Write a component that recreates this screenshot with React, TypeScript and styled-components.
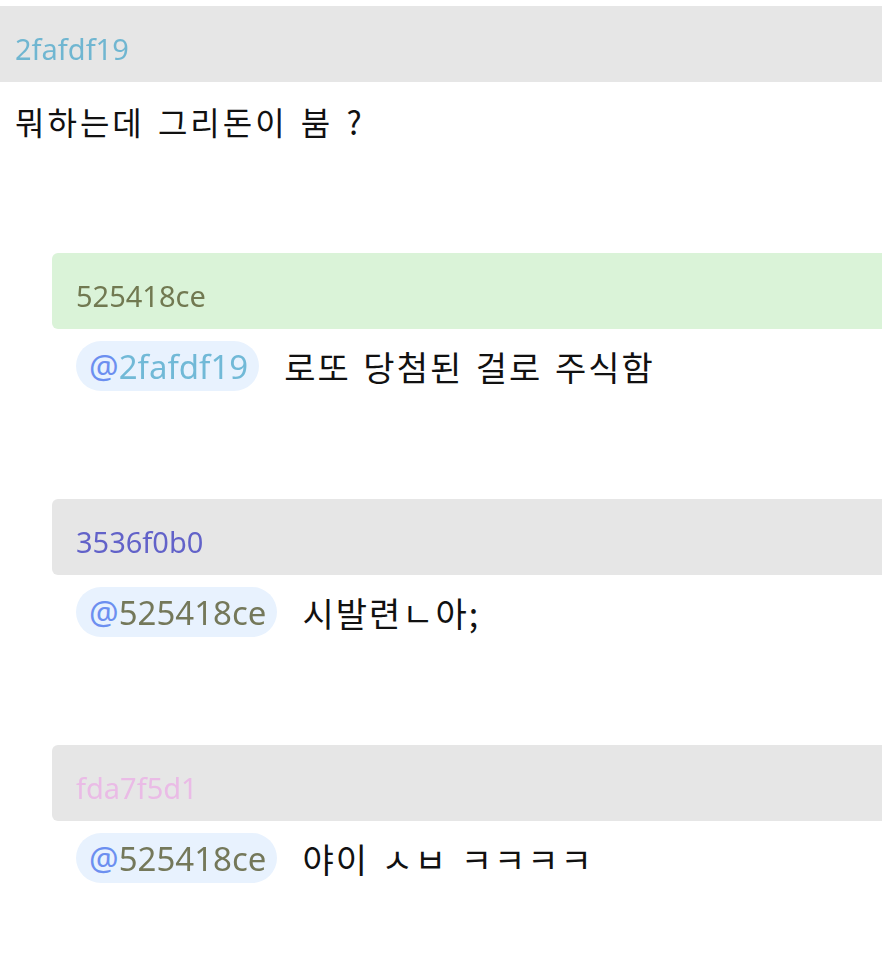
import { createGlobalStyle } from "styled-components";
import styled from "styled-components";

/* ---------------------------------------------
   Types / data
--------------------------------------------- */
type Reply = {
  id: string;
  to: string;
  text: string;
  highlight?: boolean;
};

const root = {
  id: "2fafdf19",
  text: "뭐하는데 그리돈이 붐 ?",
};

const replies: Reply[] = [
  { id: "525418ce", to: "2fafdf19", text: "로또 당첨된 걸로 주식함", highlight: true },
  { id: "3536f0b0", to: "525418ce", text: "시발련ㄴ아;" },
  { id: "fda7f5d1", to: "525418ce", text: "야이 ㅅㅂ ㅋㅋㅋㅋ" },
];

// user colour comes from the first 6 chars of the hash
const colorOf = (hash: string) => `#${hash.slice(0, 6)}`;

/* ---------------------------------------------
   Styled Components
--------------------------------------------- */
const GlobalStyle = createGlobalStyle`
  html, body {
    margin: 0;
    padding: 0;
    background: #ffffff;
    overflow: hidden;
  }
  body {
    font-family: "Noto Sans", "Noto Sans CJK KR", sans-serif;
    color: #111111;
  }
`;

const Page = styled.div`
  padding-top: 6px;
  width: 100%;
`;

const Header = styled.div<{ $bg: string; $rounded?: boolean }>`
  height: 76px;
  box-sizing: border-box;
  padding: 8px 0 0 ${(p) => (p.$rounded ? "24px" : "15px")};
  display: flex;
  align-items: center;
  background: ${(p) => p.$bg};
  border-radius: ${(p) => (p.$rounded ? "6px 0 0 6px" : "0")};
`;

// muted version of the user colour
const Tinted = styled.span<{ $color: string }>`
  color: ${(p) => p.$color};
  filter: saturate(0.72);
  opacity: 0.76;
`;

const UserId = styled(Tinted)`
  font-size: 29px;
`;

const RootBody = styled.div`
  padding: 14px 15px 0;
  font-size: 32px;
  line-height: 50px;
  letter-spacing: 3px;
  word-spacing: 3px;
  font-family: "Noto Sans CJK KR", sans-serif;
  color: #111111;
`;

const ReplyList = styled.div`
  margin-left: 52px;
  padding-top: 107px;
  display: flex;
  flex-direction: column;
  gap: 108px;
`;

const ReplyBody = styled.div`
  padding: 12px 0 0 24px;
  display: flex;
  align-items: center;
  gap: 25px;
`;

const Mention = styled.span`
  height: 50px;
  box-sizing: border-box;
  padding: 0 11px 0 13px;
  display: inline-flex;
  align-items: center;
  border-radius: 25px;
  background: #e8f2fe;
  font-size: 33px;
`;

const At = styled.span`
  color: #6c8ff0;
`;

const ReplyText = styled.span`
  font-family: "Noto Sans CJK KR", sans-serif;
  font-size: 34px;
  letter-spacing: 2px;
  word-spacing: 3px;
  color: #111111;
`;

/* ---------------------------------------------
   Component
--------------------------------------------- */
export default function App() {
  return (
    <>
      <GlobalStyle />
      <Page>
        <Header $bg="#e6e6e6">
          <UserId $color={colorOf(root.id)}>{root.id}</UserId>
        </Header>
        <RootBody>{root.text}</RootBody>

        <ReplyList>
          {replies.map((r) => (
            <div key={r.id}>
              <Header $bg={r.highlight ? "#daf3d8" : "#e6e6e6"} $rounded>
                <UserId $color={colorOf(r.id)}>{r.id}</UserId>
              </Header>
              <ReplyBody>
                <Mention>
                  <At>@</At>
                  <Tinted $color={colorOf(r.to)}>{r.to}</Tinted>
                </Mention>
                <ReplyText>{r.text}</ReplyText>
              </ReplyBody>
            </div>
          ))}
        </ReplyList>
      </Page>
    </>
  );
}
